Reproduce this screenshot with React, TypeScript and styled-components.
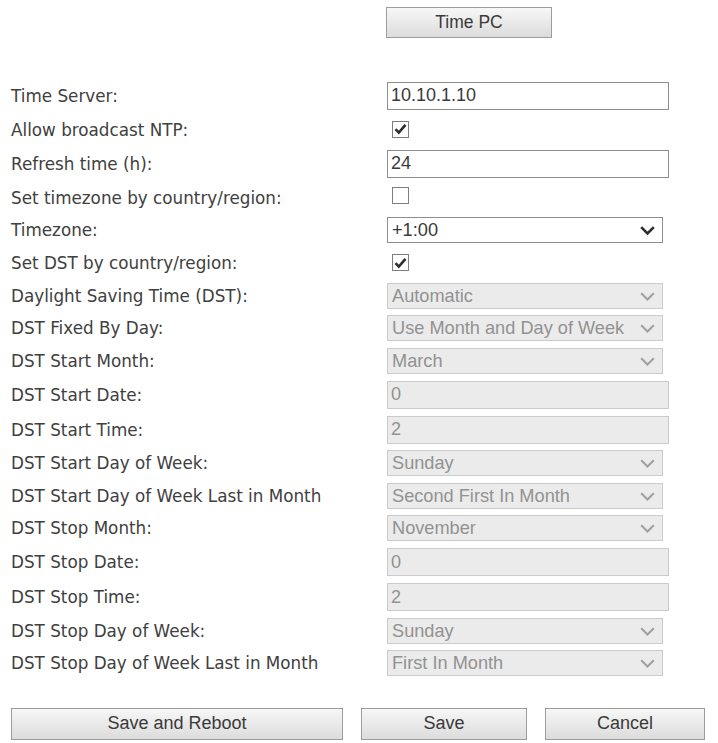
import React from "react";
import styled, { createGlobalStyle } from "styled-components";

const Global = createGlobalStyle`
  html, body { margin: 0; padding: 0; background: #ffffff; }
  * { box-sizing: border-box; }
`;

const Page = styled.div`
  width: 718px;
  height: 743px;
  padding-top: 7px;
  font-family: "DejaVu Sans", "Liberation Sans", sans-serif;
  color: #3b3b3b;
`;

const TopBar = styled.div`
  display: flex;
  padding-left: 386px;
  height: 71px;
`;

const Button = styled.button<{ $w: number }>`
  width: ${(p) => p.$w}px;
  height: 31px;
  border: 1px solid #9c9c9c;
  background: linear-gradient(#f7f7f7, #dcdcdc);
  font-family: "Liberation Sans", Arial, sans-serif;
  font-size: 17.5px;
  color: #3a3a3a;
  padding: 0;
  cursor: pointer;
`;

const Form = styled.div`
  display: flex;
  flex-direction: column;
`;

const Row = styled.div<{ $h: number }>`
  display: grid;
  grid-template-columns: 376px 1fr;
  align-items: center;
  height: ${(p) => p.$h}px;
  padding-left: 11px;
`;

const Label = styled.span`
  font-family: "DejaVu Sans", Verdana, sans-serif;
  font-size: 16.8px;
  color: #404040;
  white-space: nowrap;
`;

const TextInput = styled.input`
  width: 282px;
  height: 28px;
  border: 1px solid #8e8e8e;
  background: #ffffff;
  font-family: "Liberation Sans", Arial, sans-serif;
  font-size: 18px;
  color: #3a3a3a;
  padding: 0 0 0 3px;
  outline: none;
  &:disabled {
    border-color: #cbcbcb;
    background: #ebebeb;
    color: #929292;
  }
`;

const SelectWrap = styled.div`
  position: relative;
  width: 276px;
  height: 26px;
`;

const Select = styled.select`
  appearance: none;
  -webkit-appearance: none;
  width: 100%;
  height: 100%;
  border: 1px solid #8e8e8e;
  border-radius: 0;
  background: #ffffff;
  font-family: "Liberation Sans", Arial, sans-serif;
  font-size: 18.2px;
  color: #3a3a3a;
  padding: 0 0 0 4px;
  outline: none;
  &:disabled {
    border-color: #cbcbcb;
    background: #ebebeb;
    color: #929292;
    opacity: 1;
  }
`;

const Chevron = styled.svg<{ $off?: boolean }>`
  position: absolute;
  right: 8px;
  top: 9px;
  width: 15px;
  height: 9px;
  pointer-events: none;
  stroke: ${(p) => (p.$off ? "#a0a0a0" : "#2e2e2e")};
  stroke-width: ${(p) => (p.$off ? 2 : 2.6)};
`;

const Check = styled.span`
  display: inline-flex;
  align-items: center;
  justify-content: center;
  width: 17px;
  height: 17px;
  margin-left: 5px;
  border: 1px solid #7e7e7e;
  background: #ffffff;
`;

const Actions = styled.div`
  display: flex;
  gap: 18px;
  padding-left: 11px;
  margin-top: 28px;
`;

const ActionButton = styled(Button)`
  height: 32px;
  font-size: 18px;
`;

type Field =
  | { kind: "text"; label: string; value: string; off?: boolean }
  | { kind: "check"; label: string; checked: boolean }
  | { kind: "select"; label: string; value: string; off?: boolean };

const fields: Field[] = [
  { kind: "text", label: "Time Server:", value: "10.10.1.10" },
  { kind: "check", label: "Allow broadcast NTP:", checked: true },
  { kind: "text", label: "Refresh time (h):", value: "24" },
  { kind: "check", label: "Set timezone by country/region:", checked: false },
  { kind: "select", label: "Timezone:", value: "+1:00" },
  { kind: "check", label: "Set DST by country/region:", checked: true },
  { kind: "select", label: "Daylight Saving Time (DST):", value: "Automatic", off: true },
  { kind: "select", label: "DST Fixed By Day:", value: "Use Month and Day of Week", off: true },
  { kind: "select", label: "DST Start Month:", value: "March", off: true },
  { kind: "text", label: "DST Start Date:", value: "0", off: true },
  { kind: "text", label: "DST Start Time:", value: "2", off: true },
  { kind: "select", label: "DST Start Day of Week:", value: "Sunday", off: true },
  { kind: "select", label: "DST Start Day of Week Last in Month", value: "Second First In Month", off: true },
  { kind: "select", label: "DST Stop Month:", value: "November", off: true },
  { kind: "text", label: "DST Stop Date:", value: "0", off: true },
  { kind: "text", label: "DST Stop Time:", value: "2", off: true },
  { kind: "select", label: "DST Stop Day of Week:", value: "Sunday", off: true },
  { kind: "select", label: "DST Stop Day of Week Last in Month", value: "First In Month", off: true },
];

function Control({ f }: { f: Field }) {
  if (f.kind === "text") {
    return <TextInput defaultValue={f.value} disabled={f.off} />;
  }
  if (f.kind === "check") {
    return (
      <div>
        <Check>
          {f.checked && (
            <svg width="13" height="12" viewBox="0 0 13 12">
              <path d="M1.5 6.2 L4.8 9.6 L11.5 1.8" fill="none" stroke="#2e2e2e" strokeWidth="2.6" />
            </svg>
          )}
        </Check>
      </div>
    );
  }
  return (
    <SelectWrap>
      <Select defaultValue={f.value} disabled={f.off}>
        <option value={f.value}>{f.value}</option>
      </Select>
      <Chevron $off={f.off} viewBox="0 0 15 9">
        <path d="M1.2 1.2 L7.5 7.5 L13.8 1.2" fill="none" />
      </Chevron>
    </SelectWrap>
  );
}

const heightOf = (f: Field) => (f.kind === "text" ? 35 : f.kind === "check" ? 33 : 32.5);

export default function App() {
  return (
    <>
      <Global />
      <Page>
        <TopBar>
          <Button $w={166}>Time PC</Button>
        </TopBar>
        <Form>
          {fields.map((f) => (
            <Row key={f.label} $h={heightOf(f)}>
              <Label>{f.label}</Label>
              <Control f={f} />
            </Row>
          ))}
        </Form>
        <Actions>
          <ActionButton $w={332}>Save and Reboot</ActionButton>
          <ActionButton $w={166}>Save</ActionButton>
          <ActionButton $w={160}>Cancel</ActionButton>
        </Actions>
      </Page>
    </>
  );
}
